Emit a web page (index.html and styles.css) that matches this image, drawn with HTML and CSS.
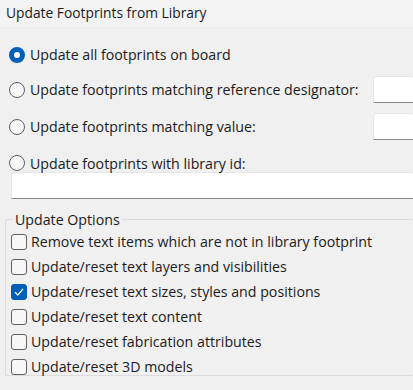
FILE: index.html
```html
<!DOCTYPE html>
<html lang="en">
<head>
  <meta charset="UTF-8">
  <title>Update Footprints from Library</title>
  <link rel="stylesheet" href="styles.css">
</head>
<body>
  <div class="titlebar">Update Footprints from Library</div>

  <div class="content">
    <div class="radio-row first">
      <span class="radio checked"></span>
      <span class="label">Update all footprints on board</span>
    </div>
    <div class="radio-row second">
      <span class="radio"></span>
      <span class="label">Update footprints matching reference designator:</span>
      <span class="field small"></span>
    </div>
    <div class="radio-row third">
      <span class="radio"></span>
      <span class="label">Update footprints matching value:</span>
      <span class="field small"></span>
    </div>
    <div class="radio-row last">
      <span class="radio"></span>
      <span class="label">Update footprints with library id:</span>
    </div>
    <div class="field wide"></div>

    <fieldset class="options">
      <legend>Update Options</legend>
      <div class="check-row"><span class="check"></span>Remove text items which are not in library footprint</div>
      <div class="check-row"><span class="check"></span>Update/reset text layers and visibilities</div>
      <div class="check-row">
        <span class="check checked">
          <svg width="10" height="8" viewBox="0 0 10 8"><path d="M1 4.2 L3.8 7 L9 1" fill="none" stroke="#fff" stroke-width="1.2"/></svg>
        </span>Update/reset text sizes, styles and positions
      </div>
      <div class="check-row"><span class="check"></span>Update/reset text content</div>
      <div class="check-row"><span class="check"></span>Update/reset fabrication attributes</div>
      <div class="check-row"><span class="check"></span>Update/reset 3D models</div>
    </fieldset>
  </div>
</body>
</html>
```

FILE: styles.css
```css
html, body {
  margin: 0;
  padding: 0;
}

body {
  width: 413px;
  height: 390px;
  overflow: hidden;
  background-color: #f0f0f0;
  font-family: "Open Sans", "Noto Sans", sans-serif;
  font-size: 14.2px;
  color: #1b1b1b;
}

.titlebar {
  height: 27px;
  line-height: 26px;
  padding-left: 6px;
  font-size: 13.8px;
  background-color: #f3f3f3;
  border-bottom: 1px solid #ececec;
}

.content {
  padding: 13px 0 0 9px;
}

.radio-row {
  display: flex;
  align-items: center;
  height: 27px;
}

.radio-row.second {
  margin-top: 8px;
}

.radio-row.third {
  margin-top: 10px;
}

.radio-row.last {
  height: 18px;
  margin-top: 14px;
}

.radio {
  width: 14px;
  height: 14px;
  border: 1px solid #5f5f5f;
  border-radius: 50%;
  background: #f7f7f7;
  margin-right: 5px;
  flex: none;
}

.radio.checked {
  width: 6px;
  height: 6px;
  border: 5px solid #005fb8;
  background: #fff;
}

.label {
  white-space: nowrap;
}

.field {
  background: #fff;
  border: 1px solid #e6e6e6;
  border-bottom: 1px solid #8a8a8a;
  border-radius: 3px 3px 0 0;
  box-sizing: border-box;
}

.field.small {
  width: 40px;
  height: 27px;
  flex: none;
  margin-left: auto;
  border-right: none;
}

.field.wide {
  margin-left: 2px;
  height: 27px;
  border-right: none;
}

.options {
  margin: 11px 0 0 -4px;
  padding: 0 0 10px 5px;
  border: 1px solid #dcdcdc;
  border-right: none;
  border-radius: 2px;
  height: 166px;
  box-sizing: border-box;
}

.options legend {
  padding: 0 2px;
  margin-left: 2px;
}

.check-row {
  display: flex;
  align-items: center;
  height: 25px;
  white-space: nowrap;
}

.check {
  width: 14px;
  height: 14px;
  border: 1px solid #616161;
  border-radius: 3px;
  background: #f7f7f7;
  margin-right: 4px;
  flex: none;
  display: flex;
  align-items: center;
  justify-content: center;
}

.check.checked {
  background: #005fb8;
  border-color: #005fb8;
}
```
